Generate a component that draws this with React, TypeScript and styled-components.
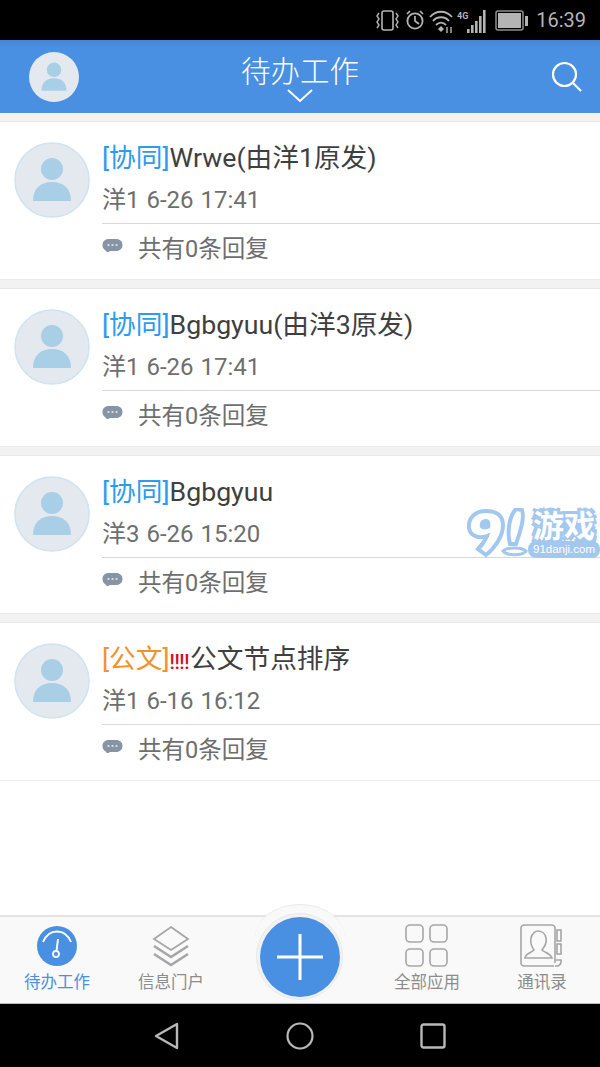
import React from 'react';
import styled, { createGlobalStyle } from 'styled-components';

const Global = createGlobalStyle`
  html, body { margin: 0; padding: 0; background: #fff; }
  body { font-family: Roboto, "Noto Sans CJK SC", "Noto Sans", sans-serif; }
  * { box-sizing: border-box; }
`;

const Screen = styled.div`
  position: relative;
  width: 600px;
  height: 1067px;
  display: flex;
  flex-direction: column;
  overflow: hidden;
  background: #fff;
`;

const StatusBar = styled.div`
  height: 40px;
  background: #000;
  display: flex;
  align-items: center;
  justify-content: flex-end;
  padding: 0 14px 0 0;
  color: #b4b4b4;
  font-size: 20px;
`;

const StatusIcons = styled.svg`
  display: block;
  margin-right: 8px;
`;

const Header = styled.header`
  height: 73px;
  background: linear-gradient(#4585d6 0, #4a90e2 8px);
  position: relative;
  display: flex;
  align-items: center;
  justify-content: space-between;
  padding: 0 17px 0 29px;
  flex-shrink: 0;
`;

const HeaderTitle = styled.div`
  position: absolute;
  left: 0;
  right: 0;
  top: 12px;
  text-align: center;
  color: #fff;
  font-size: 29.5px;
  line-height: 40px;
  font-weight: 300;
`;

const Chevron = styled.svg`
  position: absolute;
  left: 287px;
  top: 49px;
`;

const List = styled.main`
  flex: 1;
  background: #fff;
  display: flex;
  flex-direction: column;
`;

const Gap = styled.div<{ $top?: boolean }>`
  height: ${p => (p.$top ? 9 : 10)}px;
  flex-shrink: 0;
  background: #f2f2f2;
  border-top: ${p => (p.$top ? 'none' : '1px solid #ebebeb')};
  border-bottom: 1px solid #e8e8e8;
`;

const Card = styled.article`
  height: 157px;
  flex-shrink: 0;
  display: flex;
  padding: 20px 0 0 14px;
  background: #fff;
`;

const Body = styled.div`
  flex: 1;
  margin-left: 12px;
  display: flex;
  flex-direction: column;
`;

const Title = styled.div`
  font-size: 26.7px;
  line-height: 30px;
  margin-top: 1px;
  height: 30px;
  color: #3f3f3f;
  white-space: nowrap;
  display: flex;
  align-items: center;
`;

const Tag = styled.span<{ $color: string }>`
  color: ${p => p.$color};
`;

const Urgent = styled.span`
  color: #d0121b;
  font-size: 20px;
  font-weight: 500;
  letter-spacing: -0.4px;
  margin: 6px 1px 0 0;
`;

const Meta = styled.div`
  font-size: 24px;
  line-height: 28px;
  margin-top: 13px;
  height: 31px;
  color: #6e6e6e;
  word-spacing: 1px;
`;

const Rule = styled.div`
  height: 1px;
  background: #d9d9d9;
  margin-top: 6px;
`;

const EndRule = styled.div`
  height: 1px;
  background: #ececec;
`;

const ReplyRow = styled.div`
  display: flex;
  align-items: center;
  height: 44px;
  color: #6e6e6e;
  font-size: 23.5px;
  padding-top: 1px;
`;

const ReplyIcon = styled.svg`
  margin-top: -3px;
`;

const ReplyText = styled.span`
  margin-left: 15px;
`;

const TabBar = styled.nav`
  height: 89px;
  background: #f9f9f9;
  border-top: 2px solid #e4e4e4;
  border-bottom: 1px solid #bdbdbd;
  display: flex;
  position: relative;
  flex-shrink: 0;
`;

const Tab = styled.div<{ $width: number; $active?: boolean }>`
  width: ${p => p.$width}px;
  display: flex;
  flex-direction: column;
  align-items: center;
  padding-top: 7px;
  color: ${p => (p.$active ? '#4a90e2' : '#8c8c8c')};
  font-size: 16.5px;
  line-height: 20px;
`;

const TabIcon = styled.div`
  height: 44px;
  margin-bottom: 5px;
  display: flex;
  align-items: center;
`;

const Spacer = styled.div`
  flex: 1;
`;

const Bump = styled.div`
  position: absolute;
  left: 255px;
  top: -13px;
  width: 90px;
  height: 34px;
  border-radius: 50% 50% 0 0 / 100% 100% 0 0;
  background: #f9f9f9;
  border-top: 1px solid #e8e8e8;
`;

const PlusRing = styled.div`
  position: absolute;
  left: 256px;
  top: -4px;
  width: 87px;
  height: 87px;
  border-radius: 50%;
  background: #f2f2f2;
  border: 1px solid #e9e9e9;
  display: flex;
  align-items: center;
  justify-content: center;
`;

const PlusInner = styled.div`
  width: 80px;
  height: 80px;
  border-radius: 50%;
  background: #4a90e2;
  display: flex;
  align-items: center;
  justify-content: center;
`;

const NavBar = styled.div`
  height: 63px;
  background: #000;
  position: relative;
  display: flex;
  align-items: center;
  flex-shrink: 0;
  padding: 0 0 0 154px;
  gap: 106px;
`;

const Watermark = styled.div`
  position: absolute;
  left: 466px;
  top: 508px;
  width: 134px;
  height: 50px;
`;

const WatermarkCn = styled.span`
  position: absolute;
  left: 67px;
  top: 1px;
  color: #fff;
  font-size: 31px;
  line-height: 36px;
  font-weight: 700;
  white-space: nowrap;
  letter-spacing: 0;
  text-shadow: 2px 0 0 #a3c8f0, -2px 0 0 #a3c8f0, 0 2px 0 #a3c8f0, 0 -2px 0 #a3c8f0, 3px 3px 0 #a3c8f0, -3px -3px 0 #a3c8f0, 3px -3px 0 #a3c8f0, -3px 3px 0 #a3c8f0;
`;

const WatermarkEn = styled.span`
  position: absolute;
  left: 62px;
  top: 33px;
  width: 72px;
  height: 17px;
  padding-left: 5px;
  border-radius: 8px;
  background: #a3c8f0;
  color: #fff;
  font-size: 11.5px;
  line-height: 17px;
  font-family: "Liberation Sans", sans-serif;
  white-space: nowrap;
`;

const Avatar = ({ size, ring }: { size: number; ring?: boolean }) => (
  <svg width={size} height={size} viewBox="0 0 76 76">
    <circle cx="38" cy="38" r={ring ? 37 : 38} fill="#e3e9ef" stroke={ring ? '#cfe3f1' : 'none'} strokeWidth="1.5" />
    <circle cx="38" cy="27" r="11" fill="#a9cfe7" />
    <path d="M19 59 C19 46 27 40 38 40 C49 40 57 46 57 59 Z" fill="#a9cfe7" />
  </svg>
);

const Bubble = () => (
  <ReplyIcon width="21" height="15" viewBox="0 0 21 15">
    <path d="M7 1 H14 C18 1 20.5 3.4 20.5 7 C20.5 10.6 18 13 14 13 H8 C7 14 5.5 14.2 4.5 14 C4.6 13.4 4.2 12.8 3.6 12.4 C1.6 11.4 0.5 9.4 0.5 7 C0.5 3.4 3 1 7 1 Z" fill="#8794a5" />
    <circle cx="6.5" cy="7" r="1.1" fill="#e4e8ec" />
    <circle cx="10.5" cy="7" r="1.1" fill="#e4e8ec" />
    <circle cx="14.5" cy="7" r="1.1" fill="#e4e8ec" />
  </ReplyIcon>
);

const items = [
  { tag: '[协同]', color: '#2f9bec', title: 'Wrwe(由洋1原发)', meta: '洋1 6-26 17:41' },
  { tag: '[协同]', color: '#2f9bec', title: 'Bgbgyuu(由洋3原发)', meta: '洋1 6-26 17:41' },
  { tag: '[协同]', color: '#2f9bec', title: 'Bgbgyuu', meta: '洋3 6-26 15:20' },
  { tag: '[公文]', color: '#f2922a', urgent: true, title: '公文节点排序', meta: '洋1 6-16 16:12' },
];

export default function App() {
  return (
    <Screen>
      <Global />
      <StatusBar>
        <StatusIcons width="152" height="26" viewBox="0 0 152 26" fill="none">
          {/* vibrate */}
          <rect x="6" y="4" width="11" height="19" rx="2" stroke="#b4b4b4" strokeWidth="1.6" />
          <path d="M3 6 L1 9 L3 12 L1 15 L3 18 L1 21 M20 6 L22 9 L20 12 L22 15 L20 18 L22 21" stroke="#b4b4b4" strokeWidth="1.4" />
          {/* alarm */}
          <circle cx="39" cy="14" r="7.6" stroke="#b4b4b4" strokeWidth="1.8" />
          <path d="M39 9 V14 L43 17 M31 7 L34 4 M47 7 L44 4" stroke="#b4b4b4" strokeWidth="1.7" />
          {/* wifi */}
          <path d="M54 10 C60 3 70 3 76 10 M57 14 C61 9 69 9 73 14 M60 18 C63 15 67 15 70 18" stroke="#b4b4b4" strokeWidth="1.8" />
          <path d="M62 22 L65 19 L68 22 L65 25 Z" fill="#b4b4b4" />
          <path d="M71 20 V26 M75 26 V20" stroke="#b4b4b4" strokeWidth="1.4" />
          {/* signal */}
          <rect x="91" y="22" width="2.6" height="4" fill="#b4b4b4" />
          <rect x="95" y="18" width="2.6" height="8" fill="#b4b4b4" />
          <rect x="99" y="14" width="2.6" height="12" fill="#b4b4b4" />
          <rect x="103" y="9" width="2.6" height="17" fill="#b4b4b4" />
          <rect x="107" y="3" width="2.6" height="23" fill="#b4b4b4" />
          <text x="81" y="12" fontSize="9" fontWeight="700" fill="#b4b4b4" fontFamily="Roboto">4G</text>
          {/* battery */}
          <rect x="120" y="4" width="27" height="19" rx="2" stroke="#8f8f8f" strokeWidth="1.5" />
          <rect x="122" y="6" width="23" height="15" fill="#b4b4b4" />
          <rect x="149" y="9" width="3" height="10" fill="#b4b4b4" />
        </StatusIcons>
        <span>16:39</span>
      </StatusBar>

      <Header>
        <Avatar size={50} />
        <HeaderTitle>待办工作</HeaderTitle>
        <Chevron width="26" height="14" viewBox="0 0 26 14" fill="none">
          <path d="M1 1 L13 12 L25 1" stroke="#fff" strokeWidth="2" />
        </Chevron>
        <svg width="32" height="32" viewBox="0 0 32 32" fill="none">
          <circle cx="13.5" cy="13.5" r="11.5" stroke="#fff" strokeWidth="2.2" />
          <path d="M22 22 L30 30" stroke="#fff" strokeWidth="2.2" />
        </svg>
      </Header>

      <List>
        <Gap $top />
        {items.map((item, i) => (
          <React.Fragment key={i}>
            <Card>
              <Avatar size={76} ring />
              <Body>
                <Title>
                  <Tag $color={item.color}>{item.tag}</Tag>
                  {item.urgent && <Urgent>!!!!</Urgent>}
                  {item.title}
                </Title>
                <Meta>{item.meta}</Meta>
                <Rule />
                <ReplyRow>
                  <Bubble />
                  <ReplyText>共有0条回复</ReplyText>
                </ReplyRow>
              </Body>
            </Card>
            {i < items.length - 1 ? <Gap /> : <EndRule />}
          </React.Fragment>
        ))}
      </List>

      <TabBar>
        <Tab $width={114} $active>
          <TabIcon>
            <svg width="42" height="42" viewBox="0 0 42 42" fill="none">
              <circle cx="21" cy="21" r="20" fill="#4a90e2" />
              <path d="M7 17 C10 10 15 6.5 21 6.5 C27 6.5 32 10 35 17" stroke="#fff" strokeWidth="1.8" />
              <path d="M22 14 L20.5 26" stroke="#fff" strokeWidth="2" />
              <circle cx="20" cy="29" r="3" stroke="#fff" strokeWidth="1.8" />
            </svg>
          </TabIcon>
          待办工作
        </Tab>
        <Tab $width={114}>
          <TabIcon>
            <svg width="38" height="42" viewBox="0 0 38 42" fill="none">
              <path d="M19 2 L36 14 L19 25 L2 14 Z" stroke="#a6a6a6" strokeWidth="1.8" />
              <path d="M2 21 L19 32 L36 21" stroke="#a6a6a6" strokeWidth="2.6" />
              <path d="M2 29 L19 40 L36 29" stroke="#a6a6a6" strokeWidth="2.6" />
            </svg>
          </TabIcon>
          信息门户
        </Tab>
        <Spacer />
        <Tab $width={114}>
          <TabIcon>
            <svg width="44" height="44" viewBox="0 0 44 44" fill="none" stroke="#a6a6a6" strokeWidth="1.6">
              <rect x="1" y="1" width="17" height="17" rx="4" />
              <rect x="25" y="1" width="17" height="17" rx="4" />
              <rect x="1" y="25" width="17" height="17" rx="4" />
              <rect x="25" y="25" width="17" height="17" rx="4" />
            </svg>
          </TabIcon>
          全部应用
        </Tab>
        <Tab $width={116}>
          <TabIcon>
            <svg width="44" height="44" viewBox="0 0 44 44" fill="none" stroke="#a6a6a6" strokeWidth="1.6">
              <path d="M34 42 H5 C3 42 1 41 1 39 V4 C1 2 3 1 5 1 H31 C33 1 35 2 35 4 V39" />
              <path d="M35 42 H38 C40 41 41 40 41 38 V36 H36" />
              <rect x="37" y="6" width="4" height="11" />
              <rect x="37" y="20" width="4" height="10" />
              <path d="M5 34 C6 29 11 29 14 26 C11 22 10 19 11 14 C12 9 16 7 18 7 C21 7 25 9 26 14 C27 19 25 22 22 26 C25 29 30 29 32 34 Z" />
            </svg>
          </TabIcon>
          通讯录
        </Tab>
        <Bump />
        <PlusRing>
          <PlusInner>
            <svg width="48" height="48" viewBox="0 0 48 48">
              <path d="M24 1 V47 M1 24 H47" stroke="#fff" strokeWidth="3" />
            </svg>
          </PlusInner>
        </PlusRing>
      </TabBar>

      <NavBar>
        <svg width="26" height="28" viewBox="0 0 26 28" fill="none">
          <path d="M23 2 V26 L2 14 Z" stroke="#b8b8b8" strokeWidth="2.4" strokeLinejoin="round" />
        </svg>
        <svg width="28" height="28" viewBox="0 0 28 28" fill="none">
          <circle cx="14" cy="14" r="12.5" stroke="#b8b8b8" strokeWidth="2.2" />
        </svg>
        <svg width="26" height="26" viewBox="0 0 26 26" fill="none">
          <rect x="1.5" y="1.5" width="23" height="23" rx="2" stroke="#b8b8b8" strokeWidth="2.4" />
        </svg>
      </NavBar>

      <Watermark>
        <svg width="64" height="50" viewBox="0 0 64 50" fill="none">
          <path d="M20 3 C8 3 2 11 3 20 C4 28 13 31 21 28 C19 33 15 38 12 41 L20 47 C29 40 37 28 37 17 C37 8 31 3 20 3 Z" fill="#fff" stroke="#a3c8f0" strokeWidth="4" />
          <path d="M20 11 C15 11 13 15 14 19 C15 22 20 22 24 20 C25 15 24 11 20 11 Z" fill="#a3c8f0" />
          <path d="M50 1 C43 8 41 24 44 36 L50 36 C54 24 59 10 56 2 Z" fill="#fff" stroke="#a3c8f0" strokeWidth="4" />
          <path d="M37 43 C41 39 56 39 60 43 C56 48 41 48 37 43 Z" fill="#fff" stroke="#a3c8f0" strokeWidth="3" />
        </svg>
        <WatermarkCn>游戏</WatermarkCn>
        <WatermarkEn>91danji.com</WatermarkEn>
      </Watermark>
    </Screen>
  );
}
